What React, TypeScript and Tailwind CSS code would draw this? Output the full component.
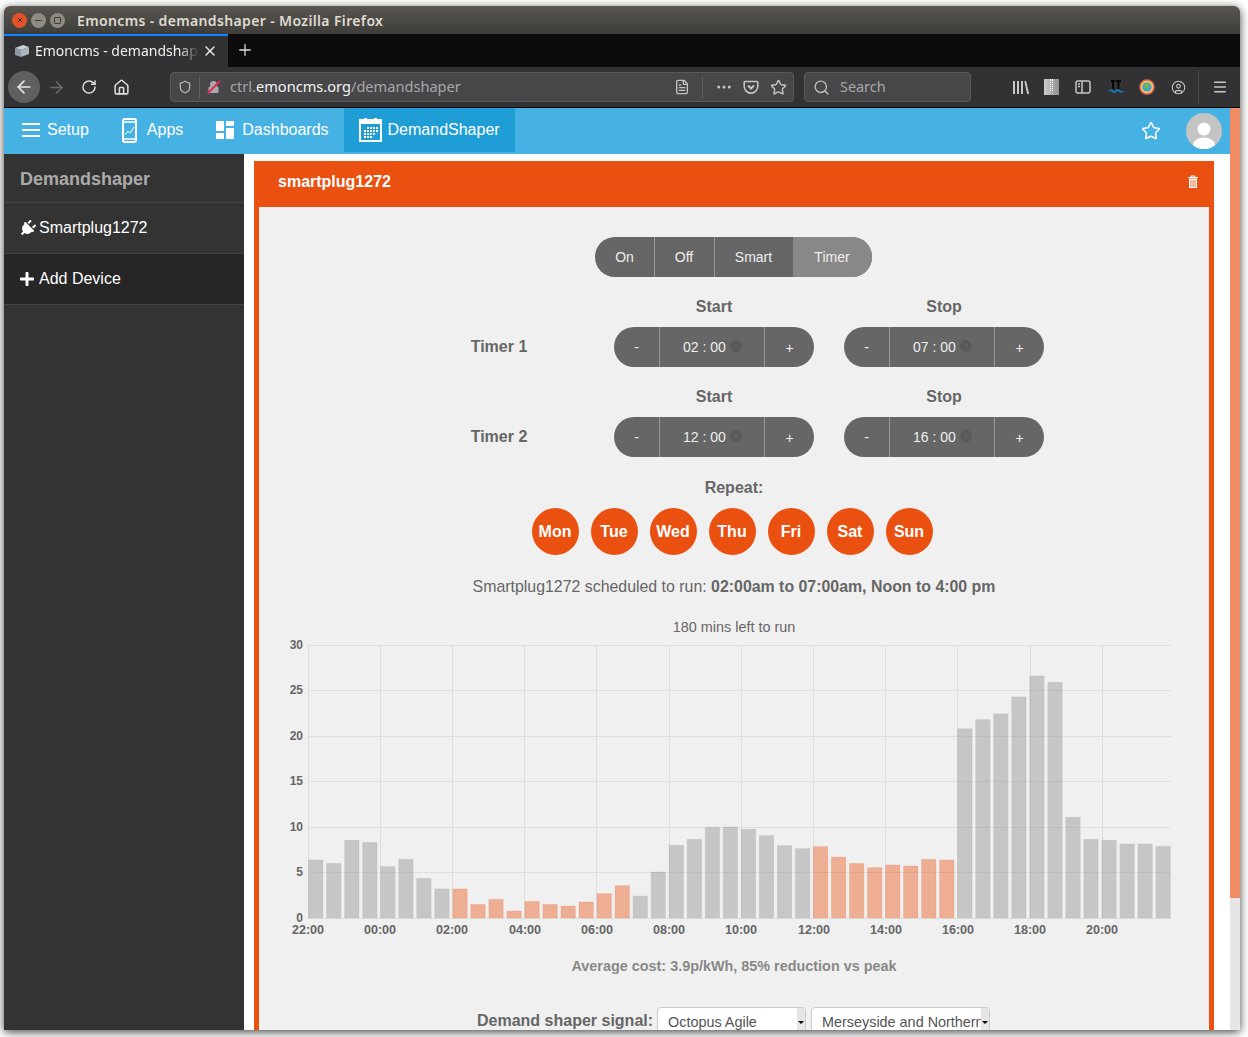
import { ArrowLeft, ArrowRight, Ellipsis, FileText, House, Menu, RotateCw, Search, Star, X, Plus, CircleUser, Shield } from 'lucide-react';
import { FaPlug, FaPlus } from 'react-icons/fa';

const values = [
  6.38, 6, 8.55, 8.3, 5.65, 6.45, 4.36, 3.2, 3.2, 1.5, 2.05, 0.77, 1.83, 1.5, 1.32, 1.76, 2.68, 3.56, 2.42, 5.06, 8, 8.65,
  9.97, 10, 9.75, 9.06, 7.96, 7.63, 7.85, 6.7, 6, 5.54, 5.83, 5.72, 6.45, 6.38, 20.8, 21.8, 22.44, 24.3, 26.6, 25.9, 11.07,
  8.65, 8.55, 8.14, 8.14, 7.88,
];
const isOn = (i: number) => (i >= 8 && i < 18) || (i >= 28 && i < 36);
const hourLabels = ['22:00', '00:00', '02:00', '04:00', '06:00', '08:00', '10:00', '12:00', '14:00', '16:00', '18:00', '20:00'];
const hourX = [308, 380, 452, 525, 597, 669, 741, 814, 886, 958, 1030, 1102];
const gridX = [308, 380, 452, 524, 596, 669, 741, 813, 885, 957, 1030, 1102];
const yTicks = [
  { label: '30', y: 645 },
  { label: '25', y: 690 },
  { label: '20', y: 736 },
  { label: '15', y: 781 },
  { label: '10', y: 827 },
  { label: '5', y: 872 },
  { label: '0', y: 918 },
];
const days = ['Mon', 'Tue', 'Wed', 'Thu', 'Fri', 'Sat', 'Sun'];

const PriceChart = () => (
  <svg viewBox="259 637 950 305" className="mt-[2px] block h-[305px] w-[950px]">
    {yTicks.map((t) => (
      <line key={t.label} x1="308" x2="1171" y1={t.y + 0.5} y2={t.y + 0.5} stroke="#dedede" />
    ))}
    {gridX.map((x) => (
      <line key={x} x1={x + 0.5} x2={x + 0.5} y1="645" y2="918" stroke="#dedede" />
    ))}
    {values.map((v, i) => {
      const h = (v / 30) * 273;
      return (
        <rect
          key={i}
          x={308.5 + i * 18.03}
          y={918 - h}
          width="14.5"
          height={h}
          fill={isOn(i) ? 'rgba(234,81,15,0.41)' : 'rgba(150,150,150,0.47)'}
          stroke={isOn(i) ? 'rgba(234,81,15,0.1)' : 'rgba(150,150,150,0.12)'}
        />
      );
    })}
    {yTicks.map((t) => (
      <text key={t.label} x="303" y={t.y + 4} textAnchor="end" fontSize="12" fontWeight="700" fill="#666">
        {t.label}
      </text>
    ))}
    {hourLabels.map((label, i) => (
      <text key={label} x={hourX[i]} y="934" textAnchor="middle" fontSize="12.6" fontWeight="700" fill="#666">
        {label}
      </text>
    ))}
  </svg>
);

const TimePill = ({ time }: { time: string }) => (
  <div className="flex h-10 w-[200px] overflow-hidden rounded-[20px] bg-[#666] text-sm text-[#eee]">
    <div className="flex w-[45px] items-center justify-center">-</div>
    <div className="flex w-[106px] items-center justify-center gap-[4px] border-x border-[#999]">
      <span className="ml-[1px]">{time}</span>
      <span className="-mt-[2px] flex h-3 w-3 items-center justify-center rounded-full bg-[#5a5a5a]">
        <X size={8} className="text-[#666]" />
      </span>
    </div>
    <div className="flex flex-1 items-center justify-center pt-[2px]">+</div>
  </div>
);

const TimerRow = ({ name, start, stop }: { name: string; start: string; stop: string }) => (
  <div className="mx-auto w-[620px]">
    <div className="flex h-10 items-end pb-[8px] text-base font-bold text-[#666]">
      <div className="ml-[190px] w-[200px] text-center">Start</div>
      <div className="ml-[30px] w-[200px] text-center">Stop</div>
    </div>
    <div className="flex items-center">
      <div className="w-[150px] text-center text-base font-bold text-[#666]">{name}</div>
      <div className="ml-10">
        <TimePill time={start} />
      </div>
      <div className="ml-[30px]">
        <TimePill time={stop} />
      </div>
    </div>
  </div>
);

const NavLink = ({ icon, label, active }: { icon: React.ReactNode; label: string; active?: boolean }) => (
  <div className={`flex h-11 items-center ${active ? 'bg-[#1f9ed5] pr-[15px]' : ''}`}>
    {icon}
    <span className="text-base text-white">{label}</span>
  </div>
);

const Select = ({ label, width }: { label: string; width: string }) => (
  <div className={`flex h-[30px] justify-between rounded-[4px] border border-[#ccc] bg-white pl-[10px] pt-[4px] text-[14.4px] text-[#555] ${width}`}>
    <span className="overflow-hidden whitespace-nowrap">{label}</span>
    <span className="-mt-[4px] flex h-[30px] w-[8px] shrink-0 flex-col items-center justify-start bg-[#e6e6e6] pt-[13px]">
      <span className="border-x-[3px] border-t-[3px] border-x-transparent border-t-black" />
    </span>
  </div>
);

export default function App() {
  return (
    <div className="h-[1037px] w-[1248px] overflow-hidden bg-white pb-[7px] pl-1 pr-2 pt-[6px] font-['Liberation_Sans',sans-serif]">
      <div className="flex h-full flex-col overflow-hidden rounded-t-[6px] shadow-[0_2px_10px_rgba(0,0,0,0.75)]">
        {/* Title bar */}
        <div className="flex h-7 shrink-0 items-center bg-gradient-to-b from-[#5a5650] to-[#3e3d39] pl-[8px]">
          <div className="flex items-center gap-[4px]">
            <span className="flex h-[15px] w-[15px] items-center justify-center rounded-full bg-[#e2532a]">
              <X size={8} strokeWidth={3} className="text-[#5a2412]" />
            </span>
            <span className="flex h-[15px] w-[15px] items-center justify-center rounded-full bg-[#8f8b84]">
              <span className="h-[1px] w-[7px] bg-[#3e3d39]" />
            </span>
            <span className="flex h-[15px] w-[15px] items-center justify-center rounded-full bg-[#8f8b84]">
              <span className="h-[7px] w-[7px] rounded-[1px] border border-[#3e3d39]" />
            </span>
          </div>
          <span className="ml-[12px] font-['Noto_Sans',sans-serif] text-[14px] font-semibold tracking-[0.36px] text-[#dfdbd2]">
            Emoncms - demandshaper - Mozilla Firefox
          </span>
        </div>

        {/* Tab strip */}
        <div className="flex h-[33px] shrink-0 bg-[#0c0c0d]">
          <div className="flex w-[224px] items-center border-t-2 border-[#0a84ff] bg-[#323234] pb-[2px] pl-[10px] pr-[10px]">
            <svg width="16" height="14" viewBox="0 0 16 14" className="shrink-0">
              <path d="M1 4 9 1l6 2-8 3z" fill="#c9d3dc" />
              <path d="M1 4l6 2v7l-6-2z" fill="#8d9aa6" />
              <path d="M7 6l8-3v7l-8 3z" fill="#aab5bf" />
            </svg>
            <span className="ml-[5px] w-[164px] overflow-hidden whitespace-nowrap font-['Noto_Sans',sans-serif] text-[14px] text-[#f0f0f0] [mask-image:linear-gradient(to_right,black_88%,transparent)]">
              Emoncms - demandshaper
            </span>
            <X size={16} strokeWidth={2} className="ml-auto shrink-0 text-[#eee]" />
          </div>
          <div className="ml-[8px] flex items-center pb-[2px]">
            <Plus size={18} strokeWidth={1.7} className="text-[#ddd]" />
          </div>
        </div>

        {/* Toolbar */}
        <div className="flex h-[41px] shrink-0 items-center border-b border-black bg-[#323234] pl-1">
          <div className="flex h-8 w-8 items-center justify-center rounded-full bg-[#5f6062]">
            <ArrowLeft size={20} className="text-[#e8e8e8]" />
          </div>
          <ArrowRight size={19} className="ml-[7px] text-[#6b6b6d]" />
          <RotateCw size={16} strokeWidth={2.2} className="ml-[15px] text-[#dcdcdc]" />
          <House size={17} strokeWidth={2.2} className="ml-[16px] text-[#dcdcdc]" />
          <div className="ml-[40px] flex h-[30px] w-[624px] items-center rounded-[4px] border border-[#59595b] bg-[#474749] pl-[7px]">
            <Shield size={14} strokeWidth={2} className="text-[#bbb]" />
            <span className="ml-[7px] h-[22px] w-px bg-[#5f5f61]" />
            <svg width="16" height="16" viewBox="0 0 16 16" className="ml-[6px]">
              <path d="M4 8V5.5a3.5 3.5 0 0 1 7 0V8h1.5v6h-10V8z" fill="#aaa" />
              <path d="M1.5 14.5 14 2" stroke="#e22850" strokeWidth="1.8" />
            </svg>
            <span className="ml-[8px] font-['Noto_Sans',sans-serif] text-[14.6px] text-[#a8a8aa]">
              ctrl.<span className="text-[#f3f3f3]">emoncms.org</span>/demandshaper
            </span>
            <FileText size={16} className="ml-auto text-[#c4c4c4]" />
            <span className="ml-[12px] h-[22px] w-px bg-[#5f5f61]" />
            <Ellipsis size={18} className="ml-[12px] text-[#c4c4c4]" />
            <svg width="16" height="16" viewBox="0 0 16 16" fill="none" stroke="#c4c4c4" strokeWidth="1.6" className="ml-[10px]">
              <path d="M2 2.5h12a.8.8 0 0 1 .8.8v4a6.8 6.8 0 0 1-13.6 0v-4a.8.8 0 0 1 .8-.8z" />
              <path d="m5 6.5 3 3 3-3" strokeWidth="2" />
            </svg>
            <Star size={17} strokeWidth={2} className="ml-[11px] mr-[6px] text-[#c4c4c4]" />
          </div>
          <div className="ml-[10px] flex h-[30px] w-[167px] items-center rounded-[4px] border border-[#59595b] bg-[#474749] pl-[8px]">
            <Search size={17} className="text-[#bbb]" />
            <span className="ml-[10px] font-['Noto_Sans',sans-serif] text-[14.4px] text-[#a8a8aa]">Search</span>
          </div>
          <svg width="17" height="15" viewBox="0 0 17 15" fill="#c8c8c8" className="ml-[41px]">
            <path d="M1 1h2v13H1zM5 1h2v13H5zM9 1h2v13H9zM12.3 1.4l1.8-.6 3 13-1.9.5z" />
          </svg>
          <div className="ml-[15px] flex h-4 w-[15px] items-start justify-center bg-gradient-to-r from-[#cfcfcf] to-[#8f8f8f]">
            <span className="h-[12px] w-[3px] border-x border-dotted border-white" />
          </div>
          <svg width="16" height="14" viewBox="0 0 16 14" fill="none" stroke="#c8c8c8" strokeWidth="1.5" className="ml-[16px]">
            <rect x="1" y="1" width="14" height="12" rx="2" />
            <path d="M7 1v12M3 4h2M3 6.5h2" />
          </svg>
          <svg width="16" height="16" viewBox="0 0 16 16" fill="none" className="ml-[17px]">
            <path d="M3 2h4M5 2v8M8 2h5M10.5 2v8" stroke="#050505" strokeWidth="1.8" />
            <path d="M1 12q1.75-2 3.5 0t3.5 0 3.5 0 3.5 0" stroke="#0a84c8" strokeWidth="1.6" />
          </svg>
          <svg width="16" height="16" viewBox="0 0 16 16" className="ml-[15px]">
            <circle cx="8" cy="8" r="7" fill="#f6c66a" stroke="#e86a4a" strokeWidth="1.5" />
            <circle cx="8" cy="8" r="4.6" fill="#3aa0d8" />
            <path d="M6 5l3-1 2 2-2 2 0 3-2-2-2-1z" fill="#78b83c" />
          </svg>
          <CircleUser size={15} strokeWidth={1.7} className="ml-[16px] text-[#c8c8c8]" />
          <span className="ml-[12px] h-[34px] w-px bg-[#4a4a4c]" />
          <Menu size={16} strokeWidth={2.2} className="ml-[13px] text-[#c8c8c8]" />
        </div>

        {/* Page */}
        <div className="flex min-h-0 flex-1">
          <div className="flex min-w-0 flex-1 flex-col">
            {/* Nav */}
            <div className="flex h-[46px] shrink-0 items-start justify-between bg-[#46b1e3]">
              <div className="flex">
                <NavLink
                  label="Setup"
                  icon={
                    <svg width="18" height="16" viewBox="0 0 18 16" fill="#fff" className="ml-[18px] mr-[7px]">
                      <path d="M0 1h18v2H0zM0 7h18v2H0zM0 13h18v2H0z" />
                    </svg>
                  }
                />
                <NavLink
                  label="Apps"
                  icon={
                    <svg width="15" height="25" viewBox="0 0 15 25" fill="none" className="ml-[33px] mr-[10px]">
                      <rect x="1" y="1" width="13" height="23" rx="2" stroke="#fff" strokeWidth="2" />
                      <path d="M2 4h11M2 21h11" stroke="#fff" strokeWidth="1.5" />
                      <path d="M3 17l3-4 2 2 4-6" stroke="#fff" strokeWidth="1" />
                    </svg>
                  }
                />
                <NavLink
                  label="Dashboards"
                  icon={
                    <svg width="18" height="20" viewBox="0 0 18 20" fill="#fff" className="ml-[33px] mr-[8px]">
                      <path d="M0 1h8v10H0zM10 1h8v5h-8zM10 8h8v11h-8zM0 13h8v6H0z" />
                    </svg>
                  }
                />
                <div className="ml-[15px]">
                  <NavLink
                    active
                    label="DemandShaper"
                    icon={
                      <svg width="23" height="24" viewBox="0 0 23 24" className="ml-[15px] mr-[6px]">
                        <rect x="1" y="2" width="21" height="21" fill="none" stroke="#fff" strokeWidth="2" />
                        <path d="M1 2h21v4H1z" fill="#fff" />
                        <path d="M5 0h3v3H5zM15 0h3v3h-3z" fill="#fff" />
                        <path
                          d="M8 9h2v2H8zM11 9h2v2h-2zM14 9h2v2h-2zM17 9h2v2h-2zM5 12h2v2H5zM8 12h2v2H8zM11 12h2v2h-2zM14 12h2v2h-2zM17 12h2v2h-2zM5 15h2v2H5zM8 15h2v2H8zM11 15h2v2h-2zM14 15h2v2h-2zM5 18h2v2H5zM8 18h2v2H8zM11 18h2v2h-2z"
                          fill="#fff"
                        />
                      </svg>
                    }
                  />
                </div>
              </div>
              <div className="flex items-center pr-[8px] pt-[5px]">
                <Star size={20} strokeWidth={1.8} className="text-white" />
                <div className="ml-[25px] h-9 w-9 overflow-hidden rounded-full bg-[#c4c4c4]">
                  <svg viewBox="0 0 36 36" className="h-9 w-9">
                    <circle cx="18" cy="16" r="6.5" fill="#fff" />
                    <ellipse cx="18" cy="32" rx="11" ry="7.5" fill="#fff" />
                  </svg>
                </div>
              </div>
            </div>

            <div className="flex min-h-0 flex-1">
              {/* Sidebar */}
              <div className="w-60 shrink-0 bg-[#333]">
                <div className="flex h-[49px] items-center border-b border-[#444] pl-4 pt-[2px] text-lg font-bold text-[#aaa]">Demandshaper</div>
                <div className="flex h-[51px] items-center border-b border-[#444] pl-[15px] text-base text-white">
                  <FaPlug size={17} className="mr-[3px] rotate-45 text-white" />
                  Smartplug1272
                </div>
                <div className="flex h-[51px] items-center border-b border-[#444] bg-[#262626] pl-[15px] text-base text-white">
                  <FaPlus size={16} className="mr-[4px] text-white" />
                  Add Device
                </div>
              </div>

              {/* Content */}
              <div className="min-w-0 flex-1 bg-white pl-[10px] pr-[16px] pt-[7px]">
                <div className="h-[870px] overflow-hidden bg-[#ea5010] px-[5px]">
                  <div className="flex h-[46px] items-center justify-between pb-[4px] pl-[19px] pr-[10px] text-base font-bold text-white">
                    smartplug1272
                    <svg width="12" height="14" viewBox="0 0 12 14" fill="none" stroke="#fff">
                      <path d="M1 2.5h10M4 2.5V1h4v1.5" />
                      <path d="M2 3.5h8V13H2z" fill="#fff" stroke="none" />
                      <path d="M4 5v7M6 5v7M8 5v7" stroke="#ea5010" strokeWidth="0.8" />
                    </svg>
                  </div>
                  <div className="h-[900px] bg-[#f0f0f0] pt-[30px]">
                    <div className="flex justify-center pr-[2px]">
                      <div className="flex h-10 w-[277px] overflow-hidden rounded-[20px] bg-[#666] text-sm text-[#eee]">
                        <div className="flex w-[60px] items-center justify-center border-r border-[#999] pl-[1px]">On</div>
                        <div className="flex w-[60px] items-center justify-center border-r border-[#999]">Off</div>
                        <div className="flex w-[78px] items-center justify-center">Smart</div>
                        <div className="flex flex-1 items-center justify-center bg-[#888]">Timer</div>
                      </div>
                    </div>
                    <div className="mt-[10px]">
                      <TimerRow name="Timer 1" start="02 : 00" stop="07 : 00" />
                    </div>
                    <div className="mt-[10px]">
                      <TimerRow name="Timer 2" start="12 : 00" stop="16 : 00" />
                    </div>
                    <div className="mt-[22px] text-center text-base font-bold leading-[18px] text-[#666]">Repeat:</div>
                    <div className="mt-[11px] flex justify-center gap-3 pr-[3px]">
                      {days.map((d) => (
                        <div key={d} className="flex h-[47px] w-[47px] items-center justify-center rounded-full bg-[#ea5010] pr-[1px] text-base font-bold text-white">
                          {d}
                        </div>
                      ))}
                    </div>
                    <div className="mt-[23px] text-center text-[15.9px] leading-[18px] text-[#666]">
                      Smartplug1272 scheduled to run: <b>02:00am to 07:00am, Noon to 4:00 pm</b>
                    </div>
                    <div className="mt-[23px] text-center text-[14.4px] leading-4 text-[#666]">180 mins left to run</div>
                    <PriceChart />
                    <div className="mt-[16px] text-center text-[14.4px] font-bold leading-4 text-[#888]">Average cost: 3.9p/kWh, 85% reduction vs peak</div>
                    <div className="mt-[33px] flex items-start pl-[218px]">
                      <span className="mt-[2px] mr-[4px] text-base font-bold text-[#666]">Demand shaper signal:</span>
                      <Select label="Octopus Agile" width="w-[149px]" />
                      <div className="ml-[5px]">
                        <Select label="Merseyside and Northern Wales" width="w-[179px]" />
                      </div>
                    </div>
                  </div>
                </div>
              </div>
            </div>
          </div>

          {/* Scrollbar */}
          <div className="w-[10px] shrink-0 bg-[#e6e6e6]">
            <div className="h-[790px] bg-[#f28c66]" />
          </div>
        </div>
      </div>
    </div>
  );
}
